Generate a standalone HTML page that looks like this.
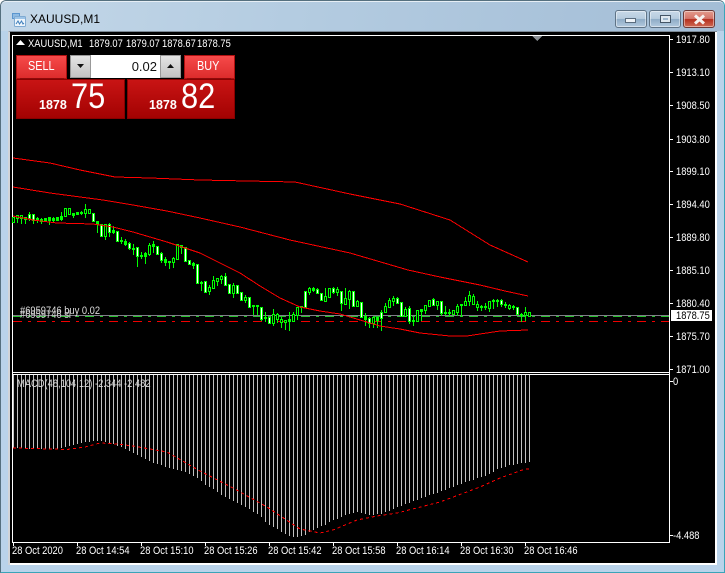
<!DOCTYPE html>
<html><head><meta charset="utf-8"><title>XAUUSD,M1</title>
<style>
html,body{margin:0;padding:0;background:#fff}
#w{position:relative;width:725px;height:573px;overflow:hidden;font-family:"Liberation Sans",sans-serif;background:#fff}
#w div,#w span{position:absolute;white-space:nowrap}
.f{left:0;top:0;width:725px;height:573px;border-radius:6px 6px 0 0;background:#b9d3ea;box-sizing:border-box;border:1px solid #55707f;border-bottom-color:#3aa4b8;border-right-color:#3aa4b8}
.t{left:1px;top:1px;width:723px;height:30px;border-radius:5px 5px 0 0;background:linear-gradient(100deg,#c3d7e8 0,#b4cce1 40%,#a3bdd6 100%);border-top:1px solid #e6eef5;box-sizing:border-box}
.a{color:#fff;font-size:11px;line-height:12px;transform:scaleX(.85);transform-origin:0 0}
.b{border:1px solid #5f7386;border-radius:3px;box-sizing:border-box;width:32px;height:18px;top:10px;background:linear-gradient(#c8d9e8 0,#b6cbde 48%,#8eabc6 52%,#b3cadf 100%);box-shadow:inset 0 0 0 1px rgba(255,255,255,.45)}
.pb{background:linear-gradient(#c91414,#a30202);box-sizing:border-box;border:1px solid #8a0000;top:79px;height:40px;width:109px}
.sb{background:linear-gradient(#f64a4a,#dd2c2c);top:55px;height:24px;box-sizing:border-box;border:1px solid #b01010}
.st{top:59px;color:#fff;font-size:12.5px;line-height:15px;transform:scaleX(.87);transform-origin:0 0}
.n{top:77px;font-size:35px;line-height:40px;color:#fff;transform:scaleX(.88);transform-origin:0 0}
.sp{top:55px;height:23px;width:21px;background:linear-gradient(#e4e4e4,#c4c4c4);border:1px solid #999;box-sizing:border-box}
</style></head><body><div id="w">
<div class="f"></div><div class="t"></div>
<svg style="position:absolute;left:11px;top:12px" width="16" height="16" viewBox="0 0 16 16"><rect x="1.500" y="1.500" width="7" height="5" fill="#8fbbe3" stroke="#5b96cf"/><rect x="3.500" y="4.500" width="11" height="10" rx="1" fill="#eef5fb" stroke="#7faad2"/><rect x="4" y="5" width="10" height="2" fill="#9cc4e8"/><path d="M5 12l2-3 1.500 3 2-3 1.500 3 1-1" fill="none" stroke="#3f7fbc"/></svg>
<div style="left:30px;top:12px;font-size:12px;line-height:15px;color:#000">XAUUSD,M1</div>
<div class="b" style="left:615px"></div><div class="b" style="left:649px"></div>
<div class="b" style="left:683px;border-color:#6b3a38;background:linear-gradient(#e29a8c 0,#d4756a 48%,#b5301f 52%,#cf6a55 100%)"></div>
<div style="left:625px;top:18px;width:11px;height:5px;background:#eef3f8;border:1px solid #5a6c7e;box-sizing:border-box"></div>
<div style="left:660px;top:15px;width:11px;height:8px;background:#dfe8f0;border:1px solid #445566;box-sizing:border-box"></div>
<div style="left:663px;top:18px;width:5px;height:2px;background:#9db6cc"></div>
<svg style="position:absolute;left:692px;top:14px" width="15" height="11" viewBox="0 0 15 11"><path d="M3 1.500L12 9.500M12 1.500L3 9.500" stroke="#f5f0ee" stroke-width="3" fill="none"/></svg>
<div style="left:8px;top:31px;width:709px;height:534px;background:#fff;border-top:1px solid #7d8a96;border-left:2px solid #d0d4d8;box-sizing:border-box"></div>
<div style="left:10px;top:32px;width:705px;height:531px;background:#000"></div>

<svg style="position:absolute;left:0;top:0" width="725" height="573" viewBox="0 0 725 573" shape-rendering="crispEdges">
<path d="M12.500 35V543M12 35.500H669.500M669.500 35V543M12 542.500H670M12 372.500H670M12 374.500H670" stroke="#fff" fill="none"/>
<path d="M670 39.500h3M670 72.500h3M670 105.500h3M670 139.500h3M670 171.500h3M670 204.500h3M670 237.500h3M670 270.500h3M670 303.500h3M670 336.500h3M670 369.500h3M670 381.500h3M670 535.500h3M13.500 543v3M77.500 543v3M141.500 543v3M205.500 543v3M269.500 543v3M333.500 543v3M397.500 543v3M461.500 543v3M525.500 543v3" stroke="#fff" fill="none"/>
<path d="M532 36h10l-5 5z" fill="#8a8f94"/>
<path d="M13 315.500H669" stroke="#808088"/>
<path d="M13 316.500H669" stroke="#25c02c" stroke-dasharray="9 6 3 6"/>
<path d="M13 321.500H669" stroke="#f00000" stroke-dasharray="9 6 3 6"/>
<g transform="translate(.5,0)" fill="none">
<path stroke="#00ff00" d="M17 215V223M21 215V224M25 217V224M29 212V221M33 214V224M37 217V223M41 218V224M49 217V225M53 217V223M61 212V221M73 213V218M81 211V215M85 204V218M97 221V233M105 224V240M109 223V237M113 226V234M121 237V244M125 239V246M129 242V250M133 244V255M137 247V267M141 252V259M145 252V264M149 243V256M153 241V253M161 252V263M165 257V266M169 261V269M173 257V268M181 245V254M193 262V269M201 281V291M209 285V295M213 276V289M217 278V286M221 275V284M225 273V286M233 283V298M245 295V303M253 305V315M257 305V315M261 307V321M265 312V322M273 309V326M277 313V323M281 317V328M285 320V330M289 312V331M293 312V322M297 307V320M301 306V313M309 287V295M313 287V292M317 288V294M325 288V302M333 287V294M337 287V296M341 291V311M345 288V305M349 290V309M357 300V307M365 313V326M369 317V328M373 317V328M377 317V328M381 310V331M385 303V313M389 298V308M393 296V306M397 297V304M405 307V317M409 306V324M413 317V326M421 309V321M425 305V314M433 298V306M437 301V310M441 301V316M445 306V315M449 309V316M453 310V315M457 304V316M461 304V317M465 297V306M469 291V306M473 294V305M477 301V311M481 305V311M485 303V310M489 301V312M493 299V309M497 299V307M501 299V307M505 302V308M509 304V310M513 305V310M521 313V322M525 307V321"/>
<path stroke="#00ff00" stroke-width="3" d="M13 217V223M17 215V219M21 215V219M25 217V220M29 214V219M33 214V221M37 218V221M41 219V222M45 218V221M49 217V221M53 218V221M57 217V221M61 216V220M65 208V217M69 208V215M73 213V216M77 212V215M81 212V214M85 209V214M89 209V214M93 213V222M97 221V225M101 224V237M105 224V237M109 224V233M113 230V233M117 231V242M121 240V242M125 241V245M129 243V249M133 248V250M137 247V257M141 255V257M145 253V257M149 245V255M153 244V247M157 246V255M161 253V261M165 259V263M169 261V263M173 258V263M177 244V260M181 245V248M185 247V262M189 260V265M193 263V266M197 264V284M201 282V284M205 281V293M209 287V292M213 280V289M217 278V282M221 276V280M225 276V286M229 284V294M233 285V294M237 285V294M241 292V301M245 297V301M249 297V308M253 305V307M257 305V307M261 307V320M265 317V319M269 317V324M273 314V324M277 314V320M281 319V323M285 320V323M289 319V322M293 314V322M297 307V316M301 306V308M305 291V308M309 288V293M313 288V291M317 289V294M321 293V301M325 296V302M329 288V298M333 288V293M337 289V293M341 291V304M345 298V305M349 291V300M353 291V307M357 301V307M361 302V318M365 316V320M369 318V324M373 317V324M377 317V321M381 312V319M385 306V313M389 300V308M393 298V302M397 298V304M401 302V317M405 309V317M409 308V322M413 320V322M417 310V322M421 309V312M425 305V311M429 300V307M433 299V306M437 301V306M441 301V314M445 312V314M449 312V314M453 310V315M457 306V313M461 304V306M465 301V306M469 295V302M473 296V305M477 304V308M481 306V308M485 306V308M489 301V309M493 300V302M497 300V302M501 300V305M505 304V306M509 305V309M513 306V308M517 307V315M521 314V316M525 312V316M529 312V317"/>
<path stroke="#fff" d="M29 215V218M33 215V220M93 214V221M101 225V236M109 225V232M117 232V241M129 244V248M137 248V256M157 247V254M161 254V260M185 248V261M189 261V264M197 265V283M205 282V292M225 277V285M229 285V293M237 286V293M241 293V300M249 298V307M261 308V319M269 318V323M305 292V307M317 290V293M321 294V300M333 289V292M341 292V303M353 292V306M361 303V317M369 319V323M381 313V318M397 299V303M401 303V316M409 309V321M433 300V305M441 302V313M501 301V304M517 308V314"/>
<path stroke="#000" d="M13 218V222M17 216V218M21 216V218M65 209V216M69 209V214M85 210V213M89 210V213M105 225V236M149 246V254M173 259V262M177 245V259M209 288V291M213 281V288M217 279V281M221 277V279M233 286V293M245 298V300M273 315V323M277 315V319M281 320V322M285 321V322M293 315V321M297 308V315M309 289V292M325 297V301M329 289V297M337 290V292M345 299V304M349 292V299M357 302V306M373 318V323M385 307V312M389 301V307M393 299V301M405 310V316M417 311V321M425 306V310M429 301V306M437 302V305M453 311V314M457 307V312M465 302V305M469 296V301M473 297V304M477 305V307M489 302V308M509 306V308M525 313V315M529 313V316"/>
<path stroke="#c0c0c0" d="M13 375V448M17 375V448M21 375V448M25 375V448M29 375V449M33 375V449M37 375V449M41 375V449M45 375V449M49 375V449M53 375V449M57 375V449M61 375V448M65 375V447M69 375V446M73 375V445M77 375V444M81 375V443M85 375V442M89 375V442M93 375V441M97 375V441M101 375V441M105 375V442M109 375V443M113 375V444M117 375V446M121 375V447M125 375V449M129 375V451M133 375V453M137 375V455M141 375V457M145 375V459M149 375V461M153 375V463M157 375V464M161 375V465M165 375V467M169 375V468M173 375V469M177 375V470M181 375V471M185 375V472M189 375V474M193 375V476M197 375V478M201 375V481M205 375V485M209 375V487M213 375V489M217 375V492M221 375V495M225 375V497M229 375V499M233 375V501M237 375V503M241 375V505M245 375V507M249 375V509M253 375V512M257 375V514M261 375V517M265 375V522M269 375V525M273 375V527M277 375V529M281 375V532M285 375V534M289 375V536M293 375V537M297 375V537M301 375V536M305 375V535M309 375V532M313 375V530M317 375V528M321 375V526M325 375V525M329 375V522M333 375V520M337 375V519M341 375V517M345 375V515M349 375V514M353 375V513M357 375V512M361 375V513M365 375V514M369 375V515M373 375V515M377 375V514M381 375V514M385 375V512M389 375V511M393 375V509M397 375V507M401 375V506M405 375V504M409 375V503M413 375V501M417 375V500M421 375V498M425 375V497M429 375V495M433 375V494M437 375V493M441 375V491M445 375V490M449 375V488M453 375V487M457 375V485M461 375V484M465 375V482M469 375V481M473 375V480M477 375V478M481 375V477M485 375V476M489 375V474M493 375V472M497 375V469M501 375V468M505 375V467M509 375V465M513 375V465M517 375V464M521 375V463M525 375V463M529 375V462"/>
</g>
</svg>
<svg style="position:absolute;left:0;top:0" width="725" height="573" viewBox="0 0 725 573" fill="none" shape-rendering="crispEdges">
<path stroke="#ff0000" d="M13 158L50 163L80 170L115 177L150 178L200 180L295 182L350 194L400 204L450 220L490 245L528 262"/>
<path stroke="#ff0000" d="M13 187L50 193L103 200L133 205L167 211L200 218L240 227L290 240L350 253L408 270L440 277L480 285L505 291L528 296"/>
<path stroke="#ff0000" d="M13 216L33 220L57 223L93 224L113 227L133 232L167 242L200 253L240 273L260 286L280 298L300 307L320 311L340 314L360 320L380 326L400 329L420 333L450 336L467 336L480 334L500 331L528 330"/>
<path stroke="#ff0000" stroke-dasharray="3 3" d="M13 448L67 449.500L85 447L100 443L117 444L133 446L150 449L167 452L200 471L233 488L267 507L300 529L320 533L333 530L357 520L377 516L397 513L440 502L480 487L500 478L525 469L529 469"/>
</svg>

<svg style="position:absolute;left:16px;top:40px" width="9" height="5"><path d="M0 5L4.500 0L9 5z" fill="#fff"/></svg>
<span class="a" style="left:28px;top:38px">XAUUSD,M1</span>
<span class="a" style="left:89px;top:38px">1879.07</span><span class="a" style="left:126px;top:38px">1879.07</span><span class="a" style="left:162px;top:38px">1878.67</span><span class="a" style="left:197px;top:38px">1878.75</span>

<div class="sb" style="left:16px;width:51px"></div>
<span class="st" style="left:28px">SELL</span>
<div style="left:20px;top:78px;width:44px;height:1px;background:#8e0a0a"></div>
<div class="sb" style="left:184px;width:51px"></div>
<span class="st" style="left:197px">BUY</span>
<div style="left:187px;top:78px;width:44px;height:1px;background:#8e0a0a"></div>
<div class="sp" style="left:70px"></div>
<div style="left:91px;top:55px;width:69px;height:23px;background:#fff;color:#111;font-size:13px;line-height:23px;text-align:right;box-sizing:border-box;padding-right:3px">0.02</div>
<div class="sp" style="left:160px"></div>
<svg style="position:absolute;left:77px;top:63px" width="7" height="6"><path d="M0 1h7L3.500 5z" fill="#111"/></svg>
<svg style="position:absolute;left:167px;top:63px" width="7" height="6"><path d="M0 5h7L3.500 1z" fill="#111"/></svg>
<div class="pb" style="left:16px"></div><div class="pb" style="left:127px;width:108px"></div>
<span style="left:39px;top:98px;font-size:12.5px;line-height:15px;font-weight:bold;color:#fff">1878</span>
<span class="n" style="left:71px">75</span>
<span style="left:149px;top:98px;font-size:12.5px;line-height:15px;font-weight:bold;color:#fff">1878</span>
<span class="n" style="left:181px">82</span>

<span class="a" style="left:676px;top:34px">1917.80</span><span class="a" style="left:676px;top:67px">1913.10</span><span class="a" style="left:676px;top:100px">1908.50</span><span class="a" style="left:676px;top:134px">1903.80</span><span class="a" style="left:676px;top:166px">1899.10</span><span class="a" style="left:676px;top:199px">1894.40</span><span class="a" style="left:676px;top:232px">1889.80</span><span class="a" style="left:676px;top:265px">1885.10</span><span class="a" style="left:676px;top:298px">1880.40</span><span class="a" style="left:676px;top:331px">1875.70</span><span class="a" style="left:676px;top:364px">1871.00</span>
<div style="left:671px;top:310px;width:41px;height:11px;background:#fff"></div>
<span class="a" style="left:676px;top:310px;color:#000">1878.75</span>
<span class="a" style="left:673px;top:376px">0</span>
<span class="a" style="left:673px;top:530px">-4.488</span>

<span class="a" style="left:20px;top:305px;color:#ddd">#6959746 buy 0.02</span>
<span class="a" style="left:20px;top:309px;color:#ccc">#6959746 sl</span>
<span class="a" style="left:17px;top:378px;color:#d8d8d8">MACD(48,104,12) -2.344 -2.482</span>

<span class="a" style="left:12px;top:545px">28 Oct 2020</span>
<span class="a" style="left:76px;top:545px">28 Oct 14:54</span>
<span class="a" style="left:140px;top:545px">28 Oct 15:10</span>
<span class="a" style="left:204px;top:545px">28 Oct 15:26</span>
<span class="a" style="left:268px;top:545px">28 Oct 15:42</span>
<span class="a" style="left:332px;top:545px">28 Oct 15:58</span>
<span class="a" style="left:396px;top:545px">28 Oct 16:14</span>
<span class="a" style="left:460px;top:545px">28 Oct 16:30</span>
<span class="a" style="left:524px;top:545px">28 Oct 16:46</span>
</div></body></html>
